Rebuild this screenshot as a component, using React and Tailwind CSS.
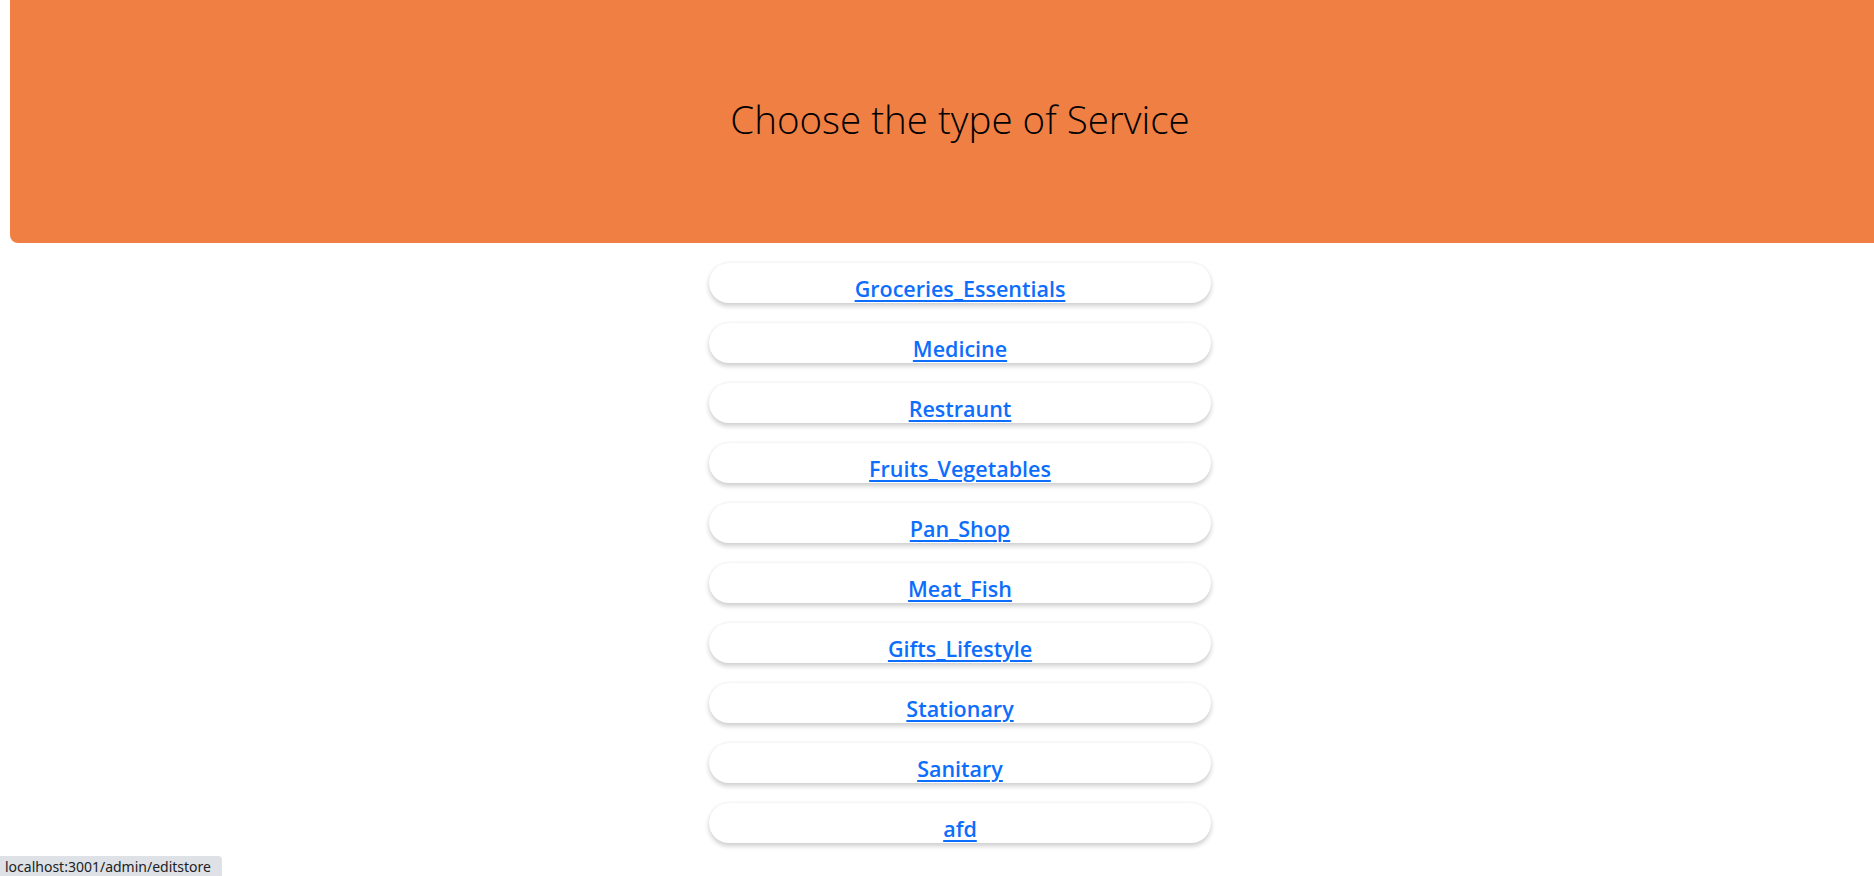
import React from "react";

const items = [
  "Groceries_Essentials",
  "Medicine",
  "Restraunt",
  "Fruits_Vegetables",
  "Pan_Shop",
  "Meat_Fish",
  "Gifts_Lifestyle",
  "Stationary",
  "Sanitary",
  "afd",
];

export default function App() {
  return (
    <div className="relative min-h-[876px] w-full overflow-hidden bg-white font-['Open_Sans',sans-serif]">
      <div className="ml-[10px] w-[1900px]">
        <header className="flex h-[243px] w-full items-center justify-center rounded-bl-[8px] bg-[#f07f44]">
          <h1 className="mt-[-4px] text-[38.5px] font-light leading-[1.2] text-black">
            Choose the type of Service
          </h1>
        </header>
        <div className="flex flex-col items-center gap-[20px] pt-[20px]">
          {items.map((it) => (
            <div
              key={it}
              className="flex h-[40px] w-[502px] justify-center rounded-full bg-white shadow-[0_3px_5px_rgba(0,0,0,0.2),0_-1px_3px_rgba(0,0,0,0.04)]"
            >
              <a
                href="#"
                className="mt-[12px] text-[21.5px] font-semibold leading-[28px] text-[#0d6efd] underline decoration-[2px] underline-offset-[3px]"
              >
                {it}
              </a>
            </div>
          ))}
        </div>
      </div>
      <div className="absolute bottom-0 left-0 flex h-[20px] w-[222px] items-center rounded-tr-[4px] bg-[#dee1e6] pl-[5px] font-['Noto_Sans',sans-serif] text-[14px] text-[#202124]">
        localhost:3001/admin/editstore
      </div>
    </div>
  );
}
